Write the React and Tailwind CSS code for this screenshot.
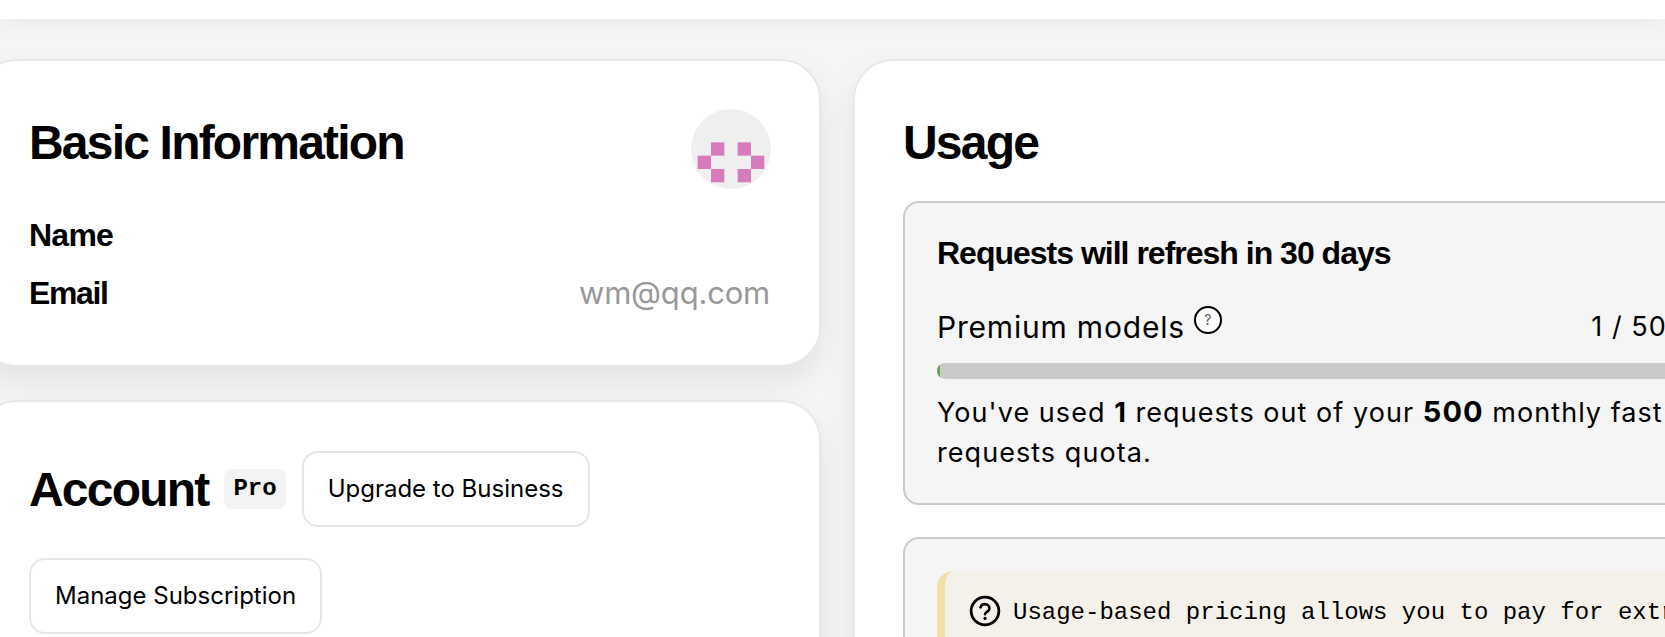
function Identicon() {
  const cells = [[1, 2], [3, 2], [0, 3], [4, 3], [1, 4], [3, 4]];
  return (
    <svg width="80" height="80" viewBox="0 0 80 80" className="block rounded-full bg-[#efefef] flex-none">
      {cells.map(([c, r]) => (
        <rect key={`${c}-${r}`} x={6.67 + c * 13.33} y={6.67 + r * 13.33} width="13.33" height="13.33" fill="#d87bbc" />
      ))}
    </svg>
  );
}

function OutlineButton({ children }) {
  return (
    <button className="h-[76px] px-[24px] rounded-[16px] border-2 border-[#e6e6e6] bg-white text-[24px] text-black font-['Inter',sans-serif] font-normal whitespace-nowrap">
      {children}
    </button>
  );
}

export default function App() {
  return (
    <div className="w-[1665px] h-[637px] overflow-hidden bg-[#f5f5f5] font-['Inter',sans-serif] text-black">
      <div className="h-[19px] bg-white shadow-[0_0_24px_rgba(0,0,0,0.07)] relative" />
      <div className="flex items-start gap-[32px] -ml-[23px] pt-[40px]">
        <div className="flex flex-col gap-[33px] w-[844px] flex-none">
          <section className="h-[308px] rounded-[40px] border-2 border-[#e8e8e8] bg-white pl-[50px] pr-[48px] pt-[48px] shadow-[0_14px_30px_rgba(0,0,0,0.08)]">
            <div className="flex items-start justify-between">
              <h2 className="font-['Liberation_Sans',sans-serif] font-bold text-[48px] leading-[56px] tracking-[-1.8px] mt-[6px]">Basic Information</h2>
              <Identicon />
            </div>
            <div className="flex items-center justify-between h-[34px] mt-[29px]">
              <span className="font-['Liberation_Sans',sans-serif] font-bold text-[32px] tracking-[-0.75px]">Name</span>
            </div>
            <div className="flex items-center justify-between h-[40px] mt-[21px]">
              <span className="font-['Liberation_Sans',sans-serif] font-bold text-[32px] tracking-[-1.4px]">Email</span>
              <span className="text-[#999999] text-[31px] font-['Inter',sans-serif] tracking-[-0.2px] mr-[1px]">wm@qq.com</span>
            </div>
          </section>
          <section className="h-[400px] rounded-[40px] border-2 border-[#e8e8e8] bg-white pl-[50px] pr-[49px] pt-[48px] shadow-[0_14px_30px_rgba(0,0,0,0.08)]">
            <div className="flex items-center gap-[16px]">
              <h2 className="font-['Liberation_Sans',sans-serif] font-bold text-[48px] leading-[76px] tracking-[-1.8px] pt-[2px]">Account</h2>
              <span className="h-[40px] px-[9px] flex items-center rounded-[8px] bg-[#f3f3f3] font-['Liberation_Mono',monospace] font-bold text-[24px]">Pro</span>
              <OutlineButton>Upgrade to Business</OutlineButton>
            </div>
            <div className="mt-[30px]">
              <OutlineButton>Manage Subscription</OutlineButton>
            </div>
          </section>
        </div>
        <section className="w-[916px] h-[700px] flex-none rounded-[40px] border-2 border-[#e8e8e8] bg-white px-[48px] pt-[49px] shadow-[0_14px_30px_rgba(0,0,0,0.08)]">
          <h2 className="font-['Liberation_Sans',sans-serif] font-bold text-[48px] leading-[56px] tracking-[-1.8px] mt-[5px]">Usage</h2>
          <div className="mt-[30px] h-[304px] rounded-[16px] border-2 border-[#cacaca] bg-[#f5f5f5] px-[32px] pt-[30px]">
            <h3 className="font-['Liberation_Sans',sans-serif] font-bold text-[32px] leading-[40px] tracking-[-1px]">Requests will refresh in 30 days</h3>
            <div className="flex items-start justify-between mt-[32px] h-[44px]">
              <div className="flex items-start gap-[9px]">
                <span className="text-[30px] leading-[44px] font-normal tracking-[0.8px]">Premium models</span>
                <span className="w-[28px] h-[28px] mt-[1px] rounded-full border-2 border-black bg-white flex items-center justify-center text-[14px] text-[#555] leading-none">?</span>
              </div>
              <span className="text-[27px] leading-[44px] tracking-[1.05px]">1 / 500</span>
            </div>
            <div className="mt-[14px] h-[16px] rounded-[8px] bg-[#c9c9c9] overflow-hidden">
              <div className="h-full w-[3px] bg-[#6aa84f]" />
            </div>
            <p className="mt-[13px] text-[27px] leading-[40px] tracking-[1.05px]">
              You've used <strong className="font-bold">1</strong> requests out of your <strong className="font-bold text-[29px] leading-[40px]">500</strong> monthly fast requests quota.
            </p>
          </div>
          <div className="mt-[32px] h-[300px] rounded-[16px] border-2 border-[#cacaca] bg-[#f5f5f5] px-[32px] pt-[32px]">
            <div className="h-[200px] rounded-[16px] border-l-[8px] border-[#f5dfa8] bg-[#f4f1ea] px-[24px] pt-[24px] flex items-start gap-[12px]">
              <svg width="32" height="32" viewBox="0 0 30 30" fill="none" className="flex-none">
                <circle cx="15" cy="15" r="13" stroke="black" strokeWidth="2.6" />
                <path d="M10.8 11.6a4.3 4.3 0 0 1 8.4 1c0 2.8-4.2 3.4-4.2 5.4" stroke="black" strokeWidth="2.4" strokeLinecap="round" />
                <circle cx="15" cy="22" r="1.5" fill="black" />
              </svg>
              <span className="font-['Liberation_Mono',monospace] text-[24px] leading-[32px] mt-[2px] whitespace-nowrap">Usage-based pricing allows you to pay for extra fast requests beyond your plan limits.</span>
            </div>
          </div>
        </section>
      </div>
    </div>
  );
}
